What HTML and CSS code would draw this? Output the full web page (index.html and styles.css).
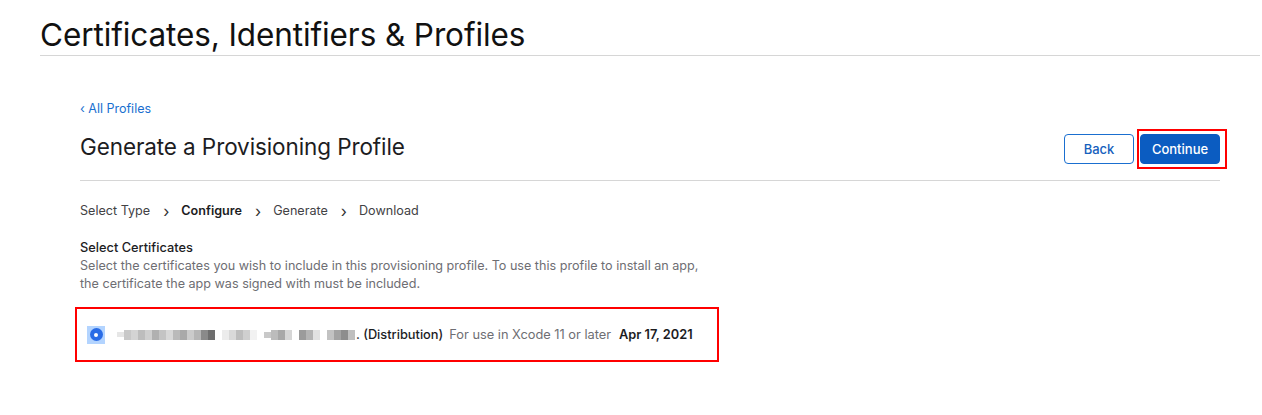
FILE: index.html
```html
<!DOCTYPE html>
<html lang="en">
<head>
<meta charset="utf-8">
<title>Certificates, Identifiers &amp; Profiles</title>
<link rel="stylesheet" href="styles.css">
</head>
<body>
<header class="top">
  <h1 class="top-title">Certificates, Identifiers &amp; Profiles</h1>
</header>
<main class="main">
  <a class="back-link" href="#">&lsaquo; All Profiles</a>
  <div class="head-row">
    <h2 class="page-title">Generate a Provisioning Profile</h2>
    <div class="actions">
      <button class="btn btn-outline">Back</button>
      <span class="highlight highlight-btn"><button class="btn btn-primary">Continue</button></span>
    </div>
  </div>
  <nav class="steps">
    <span class="step">Select Type</span>
    <span class="sep">&rsaquo;</span>
    <span class="step step-active">Configure</span>
    <span class="sep">&rsaquo;</span>
    <span class="step">Generate</span>
    <span class="sep">&rsaquo;</span>
    <span class="step">Download</span>
  </nav>
  <section class="section">
    <h3 class="section-title">Select Certificates</h3>
    <p class="section-desc">Select the certificates you wish to include in this provisioning profile. To use this profile to install an app,<br>the certificate the app was signed with must be included.</p>
  </section>
  <div class="highlight highlight-row">
    <label class="cert-row">
      <span class="radio"><span class="radio-dot"></span></span>
      <span class="mosaic" aria-hidden="true">
        <i style="background:#e6e6e6;height:5px"></i><i style="background:#c8c8c8"></i><i style="background:#d4d4d4"></i><i style="background:#bdbdbd"></i><i style="background:#cfcfcf"></i><i style="background:#b0b0b0"></i><i style="background:#c4c4c4"></i><i style="background:#d8d8d8"></i><i style="background:#bababa"></i><i style="background:#a9a9a9"></i><i style="background:#cbcbcb"></i><i style="background:#b6b6b6"></i><i style="background:#8a8a8a"></i><i style="background:#6e6e6e"></i><i style="background:#fff"></i><i style="background:#ececec"></i><i style="background:#d9d9d9"></i><i style="background:#bdbdbd"></i><i style="background:#cfcfcf"></i><i style="background:#f2f2f2"></i><i style="background:#fff"></i><i style="background:#c9c9c9;height:6px"></i><i style="background:#bcbcbc"></i><i style="background:#a8a8a8"></i><i style="background:#d6d6d6"></i><i style="background:#fff"></i><i style="background:#9b9b9b"></i><i style="background:#b4b4b4"></i><i style="background:#e2e2e2"></i><i style="background:#fff"></i><i style="background:#c2c2c2"></i><i style="background:#a3a3a3"></i><i style="background:#8d8d8d"></i><i style="background:#bfbfbf"></i>
      </span>
      <span class="cert-name">. (Distribution)</span>
      <span class="cert-note">For use in Xcode 11 or later</span>
      <span class="cert-date">Apr 17, 2021</span>
    </label>
  </div>
</main>
</body>
</html>
```
FILE: styles.css
```css
* { box-sizing: border-box; }
html, body { margin: 0; padding: 0; background: #fff; }
body {
  font-family: Inter, "Liberation Sans", sans-serif;
  color: #1d1d1f;
  width: 1262px;
  height: 415px;
  overflow: hidden;
}
.top {
  margin: 0 2px 0 40px;
  border-bottom: 1px solid #d6d6d6;
  padding-top: 15px;
  height: 56px;
}
.top-title {
  margin: 0;
  font-size: 31.5px;
  font-weight: 400;
  line-height: 40px;
  letter-spacing: -0.1px;
  color: #111;
}
.main {
  margin: 0 42px 0 80px;
  padding-top: 45px;
}
.back-link {
  display: block;
  font-size: 12.5px;
  line-height: 16px;
  color: #1a6fd0;
  text-decoration: none;
}
.head-row {
  display: flex;
  align-items: center;
  justify-content: space-between;
  margin-top: 9px;
  height: 46px;
  border-bottom: 1px solid #d6d6d6;
  padding-bottom: 8px;
  box-sizing: content-box;
}
.page-title {
  margin: 0 0 6px;
  font-size: 22.5px;
  font-weight: 400;
  color: #1d1d1f;
  letter-spacing: -0.1px;
}
.actions {
  display: flex;
  align-items: center;
  gap: 3px;
  margin-right: -7px;
}
.btn {
  font-family: inherit;
  font-size: 13px;
  font-weight: 500;
  height: 30px;
  border-radius: 4px;
  cursor: pointer;
}
.btn-outline {
  width: 70px;
  background: #fff;
  border: 1px solid #1a6fd0;
  color: #1560bd;
}
.btn-primary {
  width: 80px;
  background: #0b5cc1;
  border: 1px solid #0b5cc1;
  color: #fff;
  display: block;
}
.highlight {
  border: 2px solid #f00;
}
.highlight-btn {
  display: block;
  padding: 3px 5px 3px 1px;
}
.steps {
  display: flex;
  align-items: center;
  margin-top: 21px;
  font-size: 12.6px;
  line-height: 18px;
  color: #424245;
}
.sep {
  margin: 0 12px 0 13px;
  font-size: 16px;
  color: #333;
  line-height: 18px;
}
.step-active { font-weight: 600; color: #1d1d1f; }
.section { margin-top: 19px; }
.section-title {
  margin: 0;
  font-size: 12.8px;
  font-weight: 500;
  line-height: 18px;
  color: #1d1d1f;
}
.section-desc {
  margin: 0;
  font-size: 12.6px;
  line-height: 18px;
  color: #6e6e73;
}
.highlight-row {
  width: 644px;
  height: 55px;
  margin: 14px 0 0 -5px;
  display: flex;
  align-items: center;
  padding-left: 10px;
}
.cert-row {
  display: flex;
  align-items: center;
  font-size: 12.8px;
  color: #1d1d1f;
}
.radio {
  width: 18px;
  height: 18px;
  background: #b3d4ff;
  display: flex;
  align-items: center;
  justify-content: center;
  margin-right: 12px;
}
.radio-dot {
  width: 13px;
  height: 13px;
  border-radius: 50%;
  background: #2a6ce6;
  position: relative;
}
.radio-dot::after {
  content: "";
  position: absolute;
  left: 4.5px;
  top: 4.5px;
  width: 4px;
  height: 4px;
  border-radius: 50%;
  background: #fff;
}
.mosaic {
  display: flex;
  align-items: center;
  width: 239px;
  height: 14px;
}
.mosaic i {
  display: block;
  width: 7px;
  height: 10px;
}
.cert-name { font-weight: 500; }
.cert-note { color: #6e6e73; margin-left: 6px; }
.cert-date { font-weight: 600; margin-left: 8px; }
```
